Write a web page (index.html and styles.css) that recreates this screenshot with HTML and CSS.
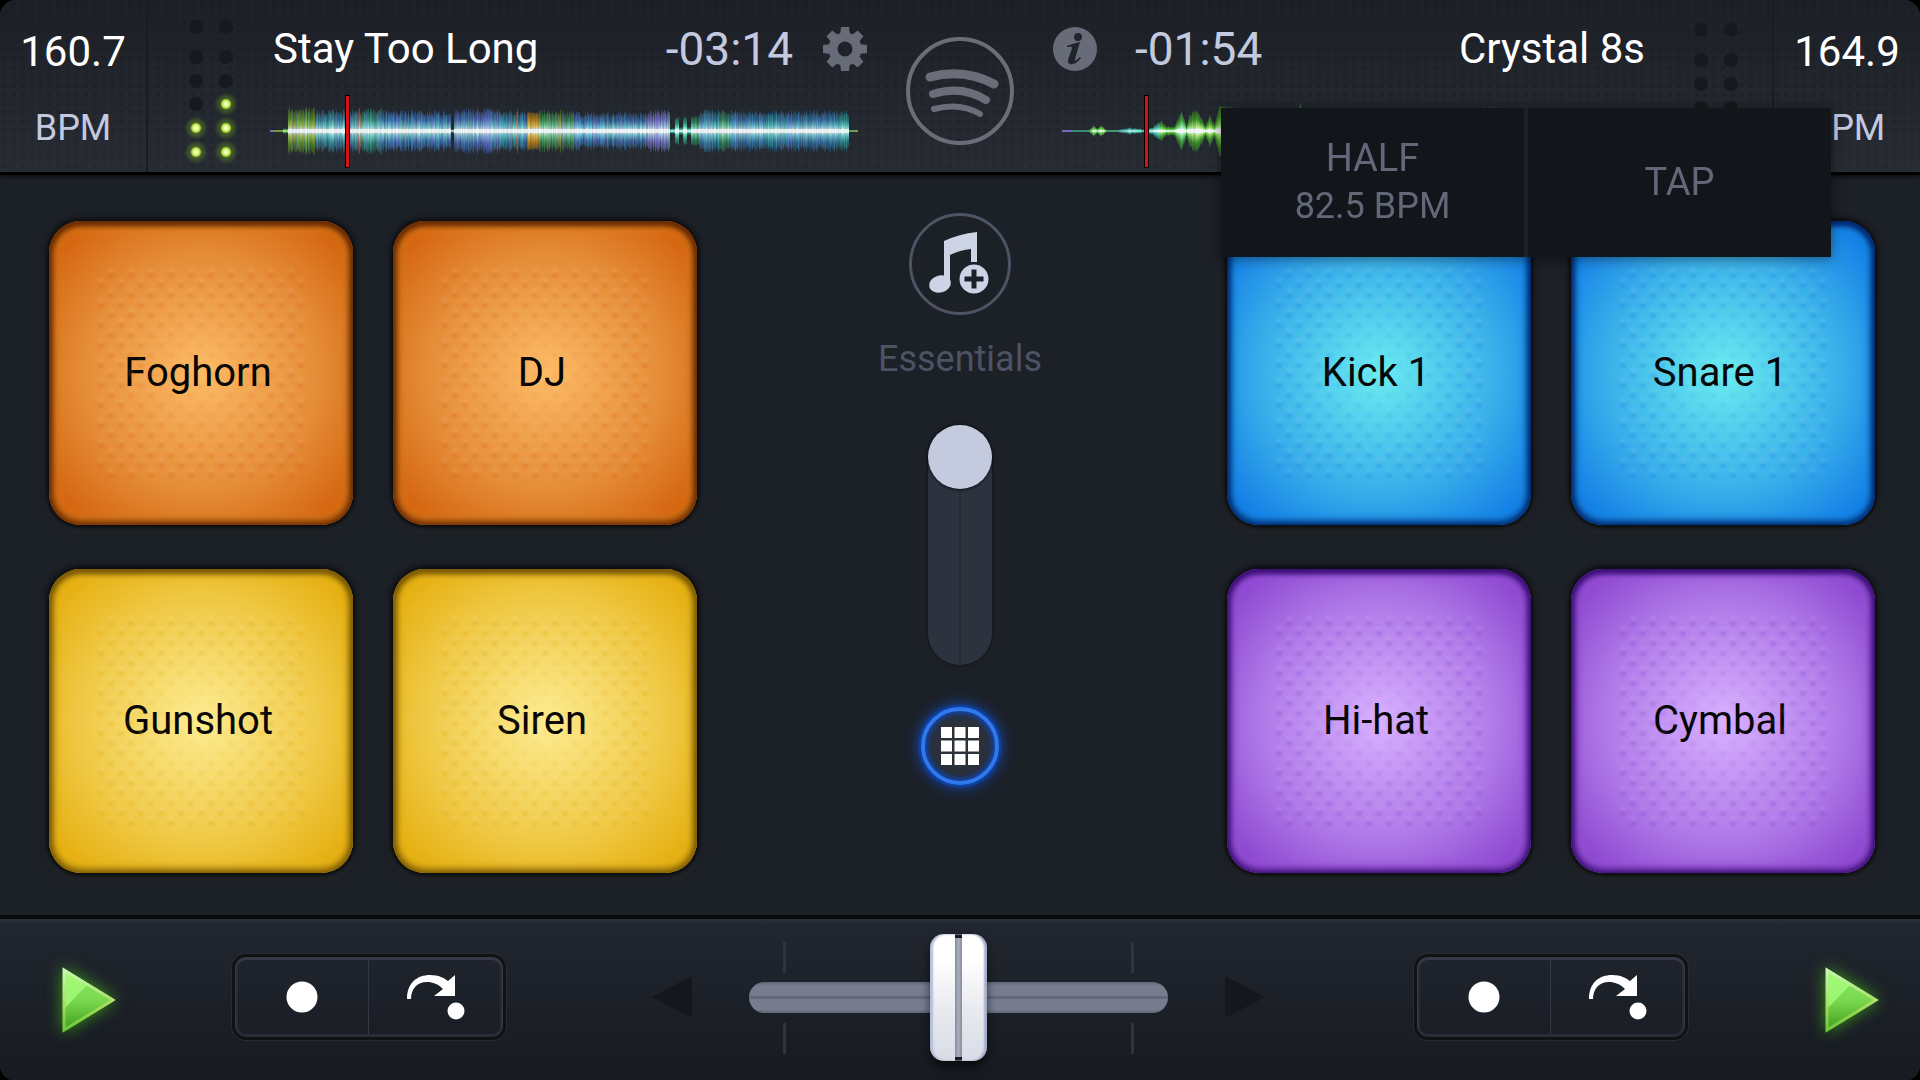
FILE: index.html
```html
<!DOCTYPE html>
<html lang="en">
<head>
    <meta charset="UTF-8">
    <meta name="viewport" content="width=device-width, initial-scale=1.0">
    <title>DJ Mixer</title>
    <link rel="stylesheet" href="styles.css">
</head>
<body>

<svg width="0" height="0" class="defs" aria-hidden="true">
    <defs>
        <linearGradient id="playFill" x1="0" y1="0" x2="0" y2="1">
            <stop offset="0" stop-color="#8fe868"/>
            <stop offset="0.5" stop-color="#79d94e"/>
            <stop offset="1" stop-color="#3f9a1c"/>
        </linearGradient>
        <linearGradient id="playEdge" x1="0" y1="0" x2="0" y2="1">
            <stop offset="0" stop-color="#c8f8b4"/>
            <stop offset="0.6" stop-color="#a5dc5c"/>
            <stop offset="1" stop-color="#6cc83a"/>
        </linearGradient>
        <radialGradient id="led">
            <stop offset="0" stop-color="#fffff0"/>
            <stop offset="0.4" stop-color="#f0fca0"/>
            <stop offset="1" stop-color="#8cc81e"/>
        </radialGradient>
        <radialGradient id="ledGlow">
            <stop offset="0.3" stop-color="#7ab41e" stop-opacity="0.5"/>
            <stop offset="1" stop-color="#7ab41e" stop-opacity="0"/>
        </radialGradient>
        <g id="ledOn">
            <circle r="12" fill="url(#ledGlow)"/>
            <circle r="5" fill="url(#led)"/>
        </g>
        <circle id="ledOff" r="7" fill="#16191d"/>
        <g id="playIcon">
            <path d="M1 1 L53 33 L1 65 Z" fill="url(#playFill)"/>
            <path d="M2 3 L26 17 L2 42 Z" fill="#a8ff7c" opacity="0.75"/>
            <path d="M2 3 L51 33 L2 63 Z" fill="none" stroke="url(#playEdge)" stroke-width="3"/>
        </g>
        <g id="jumpIcon" fill="#fff">
            <path d="M0 25 C0 9 10 1 23 1 C32 1 37 4 41 7 L48 1 V22 H27 L36 15 C31 10 26 8 20 8 C10 8 4 15 4 25 Z"/>
            <circle cx="49" cy="37" r="8.5"/>
        </g>
    </defs>
</svg>

<div class="app">
    <header class="header">
        <div class="bpm">
            <span class="bpm-value">160.7</span>
            <span class="bpm-label">BPM</span>
        </div>
        <svg class="meter" width="60" height="172" viewBox="0 0 60 172">
            <use href="#ledOff" x="15" y="27"/><use href="#ledOff" x="45" y="27"/>
            <use href="#ledOff" x="15" y="57"/><use href="#ledOff" x="45" y="57"/>
            <use href="#ledOff" x="15" y="81"/><use href="#ledOff" x="45" y="81"/>
            <use href="#ledOff" x="15" y="104"/><use href="#ledOn" x="45" y="104"/>
            <use href="#ledOn" x="15" y="128"/><use href="#ledOn" x="45" y="128"/>
            <use href="#ledOn" x="15" y="152"/><use href="#ledOn" x="45" y="152"/>
        </svg>

        <section class="deck deck-left">
            <div class="deck-info">
                <span class="deck-title">Stay Too Long</span>
                <span class="deck-time">-03:14</span>
                <button type="button" class="icon-button" aria-label="Settings">
                    <svg width="44" height="44" viewBox="-22 -22 44 44">
                        <g fill="#686c78">
                            <g id="teeth">
                                <path d="M-5 -14 L-4 -22 H4 L5 -14 Z M-5 14 L-4 22 H4 L5 14 Z M-14 -5 L-22 -4 V4 L-14 5 Z M14 -5 L22 -4 V4 L14 5 Z"/>
                            </g>
                            <use href="#teeth" transform="rotate(45)"/>
                        </g>
                        <circle r="12" fill="none" stroke="#686c78" stroke-width="9"/>
                    </svg>
                </button>
            </div>
            <div class="wave">
                <canvas id="waveLeft" height="74"></canvas>
                <i class="playhead" style="left: 12.8%"></i>
            </div>
        </section>

        <div class="source">
            <button type="button" class="icon-button" aria-label="Music source">
                <svg width="110" height="110" viewBox="-1 -1 110 110" fill="none" stroke="#6b6e79" stroke-linecap="round">
                    <circle cx="54" cy="54" r="52" stroke-width="4"/>
                    <path d="M24 40 Q58 31 88 47" stroke-width="9"/>
                    <path d="M27 57 Q56 48 80 63" stroke-width="8"/>
                    <path d="M28 72 Q54 65 74 77" stroke-width="6"/>
                </svg>
            </button>
        </div>

        <section class="deck deck-right">
            <div class="deck-info">
                <button type="button" class="icon-button" aria-label="Track info">
                    <svg width="44" height="44" viewBox="0 0 44 44">
                        <circle cx="22" cy="22" r="22" fill="#686c78"/>
                        <circle cx="25" cy="10" r="4" fill="#20242b"/>
                        <path d="M14 19 C18 17 23 16 27 15 L22 32 C21 35 24 33 27 30 L28 31 C24 36 20 38 17 37 C14 36 15 33 16 30 L19 21 C19 19 17 20 14 20 Z" fill="#20242b"/>
                    </svg>
                </button>
                <span class="deck-time">-01:54</span>
                <span class="deck-title">Crystal 8s</span>
            </div>
            <div class="wave">
                <canvas id="waveRight" height="74"></canvas>
                <i class="playhead" style="left: 14%"></i>
            </div>
        </section>

        <svg class="meter meter-right" width="60" height="172" viewBox="0 0 60 172">
            <use href="#ledOff" x="15" y="30"/><use href="#ledOff" x="45" y="30"/>
            <use href="#ledOff" x="15" y="60"/><use href="#ledOff" x="45" y="60"/>
            <use href="#ledOff" x="15" y="84"/><use href="#ledOff" x="45" y="84"/>
            <use href="#ledOff" x="15" y="108"/><use href="#ledOff" x="45" y="108"/>
        </svg>
        <div class="bpm bpm-right">
            <span class="bpm-value">164.9</span>
            <span class="bpm-label">BPM</span>
        </div>

        <div class="bpm-menu">
            <button type="button" class="bpm-option">HALF<span class="bpm-option-sub">82.5 BPM</span></button>
            <button type="button" class="bpm-option">TAP</button>
        </div>
    </header>

    <main class="main">
        <div class="pads">
            <button type="button" class="pad pad-orange">Foghorn</button>
            <button type="button" class="pad pad-orange">DJ</button>
            <button type="button" class="pad pad-yellow">Gunshot</button>
            <button type="button" class="pad pad-yellow">Siren</button>
        </div>

        <div class="center">
            <button type="button" class="pack-button" aria-label="Choose sample pack">
                <svg width="102" height="102" viewBox="0 0 102 102">
                    <circle cx="51" cy="51" r="49.5" fill="none" stroke="#4f5363" stroke-width="3"/>
                    <g fill="#cdd4e6">
                        <path d="M35 28 Q50 21 68 19 V49 L62 49 V36 Q51 37 41 42 V71 H35 Z"/>
                        <ellipse cx="31" cy="71" rx="11" ry="8.5" transform="rotate(-14 31 71)"/>
                        <circle cx="65" cy="66" r="14.5"/>
                    </g>
                    <path d="M65 56.500 V75.500 M55.500 66 H74.500" stroke="#1c2027" stroke-width="5"/>
                </svg>
            </button>
            <label class="pack-name" for="padVolume">Essentials</label>
            <input type="range" id="padVolume" class="volume" min="0" max="100" value="100">
            <button type="button" class="grid-button" aria-label="Pads view">
                <svg width="38" height="38" viewBox="0 0 38 38" fill="#fff">
                    <path d="M0 0h11v11H0z M13.500 0h11v11h-11z M27 0h11v11H27z M0 13.500h11v11H0z M13.500 13.500h11v11h-11z M27 13.500h11v11H27z M0 27h11v11H0z M13.500 27h11v11h-11z M27 27h11v11H27z"/>
                </svg>
            </button>
        </div>

        <div class="pads">
            <button type="button" class="pad pad-blue">Kick 1</button>
            <button type="button" class="pad pad-blue">Snare 1</button>
            <button type="button" class="pad pad-purple">Hi-hat</button>
            <button type="button" class="pad pad-purple">Cymbal</button>
        </div>
    </main>

    <footer class="footer">
        <div class="transport transport-left">
            <button type="button" class="play" aria-label="Play left deck">
                <svg width="54" height="66" viewBox="0 0 54 66"><use href="#playIcon"/></svg>
            </button>
            <div class="cue-group">
                <button type="button" class="cue" aria-label="Cue">
                    <svg width="32" height="32" viewBox="0 0 32 32"><circle cx="16" cy="16" r="15.5" fill="#fff"/></svg>
                </button>
                <button type="button" class="jump" aria-label="Jump to cue">
                    <svg width="58" height="46" viewBox="0 0 58 46"><use href="#jumpIcon"/></svg>
                </button>
            </div>
        </div>

        <div class="crossfader">
            <svg width="40" height="44" viewBox="0 0 40 44"><path d="M40 1 V43 L0 22 Z" fill="#14171b"/></svg>
            <div class="fader">
                <input type="range" min="0" max="100" value="50" aria-label="Crossfader">
            </div>
            <svg width="40" height="44" viewBox="0 0 40 44"><path d="M0 1 V43 L40 22 Z" fill="#14171b"/></svg>
        </div>

        <div class="transport transport-right">
            <div class="cue-group">
                <button type="button" class="cue" aria-label="Cue">
                    <svg width="32" height="32" viewBox="0 0 32 32"><circle cx="16" cy="16" r="15.5" fill="#fff"/></svg>
                </button>
                <button type="button" class="jump" aria-label="Jump to cue">
                    <svg width="58" height="46" viewBox="0 0 58 46"><use href="#jumpIcon"/></svg>
                </button>
            </div>
            <button type="button" class="play" aria-label="Play right deck">
                <svg width="54" height="66" viewBox="0 0 54 66"><use href="#playIcon"/></svg>
            </button>
        </div>
    </footer>
</div>

<script src="script.js"></script>
</body>
</html>
```

FILE: styles.css
```css
* {
    box-sizing: border-box;
}

body {
    margin: 0;
    background-color: #000;
    font-family: Roboto, "Noto Sans", sans-serif;
    color: #fff;
}

button {
    padding: 0;
    border: none;
    background: none;
    font-family: inherit;
    color: inherit;
    cursor: pointer;
}

svg,
canvas {
    display: block;
}

.defs {
    position: absolute;
}

.app {
    display: flex;
    flex-direction: column;
    min-height: 100vh;
    border-radius: 16px;
    overflow: hidden;
    background-color: #1c2027;
}

/* Header */
.header {
    position: relative;
    z-index: 2;
    display: flex;
    height: 175px;
    border-bottom: 3px solid #000;
    background-image:
        radial-gradient(circle, rgba(0, 0, 0, 0.08) 2px, transparent 3px),
        linear-gradient(#1d2026, #22262d 50%, #282c34);
    background-size: 9px 9px, 100% 100%;
    box-shadow: 0 2px 4px rgba(0, 0, 0, 0.6);
}

.bpm {
    display: flex;
    flex-direction: column;
    align-items: center;
    gap: 32px;
    width: 148px;
    padding-top: 28px;
    border-right: 2px solid #191c21;
}

.bpm-right {
    border-right: none;
    border-left: 2px solid #191c21;
}

.bpm-value {
    font-size: 42px;
    line-height: 48px;
}

.bpm-label {
    font-size: 36px;
    line-height: 40px;
    color: #c3cae0;
}

.meter {
    width: 122px;
    padding-right: 29px;
    padding-left: 33px;
}

.meter-right {
    padding-right: 26px;
    padding-left: 36px;
}

.deck {
    flex: 1;
    min-width: 0;
    padding-top: 25px;
}

.deck-info {
    display: flex;
    align-items: center;
    height: 48px;
    margin-bottom: 21px;
    line-height: 48px;
    white-space: nowrap;
}

.deck-left .deck-info {
    padding-left: 3px;
}

.deck-right .deck-info {
    padding-right: 5px;
}

.deck-title {
    font-size: 42px;
}

.deck-time {
    font-size: 46px;
    color: #c3cae0;
}

.deck-left .deck-time {
    margin-right: 30px;
    margin-left: auto;
}

.deck-right .deck-time {
    margin-right: auto;
    margin-left: 38px;
}

.wave {
    position: relative;
    height: 74px;
}

.deck-left .wave {
    margin-right: 9px;
}

.deck-right .wave {
    margin-left: 9px;
}

.wave canvas {
    width: 100%;
    height: 74px;
}

.playhead {
    position: absolute;
    top: 1px;
    bottom: 0;
    width: 5px;
    border: 1px solid #000;
    background-color: #dc0f14;
}

.source {
    display: flex;
    justify-content: center;
    align-items: flex-start;
    width: 186px;
    padding-top: 36px;
}

.bpm-menu {
    position: absolute;
    top: 108px;
    right: 89px;
    display: flex;
    gap: 4px;
    background-color: #1c1f24;
    box-shadow: 0 2px 12px rgba(0, 0, 0, 0.45);
}

.bpm-option {
    display: flex;
    flex-direction: column;
    justify-content: center;
    align-items: center;
    width: 303px;
    height: 149px;
    padding-bottom: 2px;
    background-color: #121519;
    font-size: 38px;
    line-height: 48px;
    color: #636879;
}

.bpm-option-sub {
    font-size: 36px;
}

/* Pads */
.main {
    flex: 1;
    display: grid;
    grid-template-columns: 1fr 530px 1fr;
    align-items: start;
    padding: 0 45px 42px 49px;
}

.pads {
    display: grid;
    grid-template-columns: 1fr 1fr;
    gap: 44px 40px;
    padding-top: 46px;
}

.pad {
    --light: #fdbb66;
    --mid: #e58d38;
    --deep: #d4620e;
    --edge: #6a2c04;
    --rim: rgba(226, 138, 34, 0.6);
    --dot: rgba(214, 80, 10, 0.45);
    position: relative;
    aspect-ratio: 1;
    padding-right: 6px;
    border-radius: 32px;
    background: radial-gradient(circle, var(--light), var(--mid) 54%, var(--deep) 90%);
    box-shadow:
        inset 0 3px 5px 1px var(--edge),
        inset 0 0 7px 4px var(--edge),
        inset 0 0 8px 9px var(--rim),
        0 0 4px 3px #0a0c0e,
        0 3px 4px 5px #23262a;
    font-size: 40px;
    line-height: 48px;
    color: #050505;
}

/* two offset layers of bumps make the rubber texture */
.pad::before,
.pad::after {
    content: "";
    position: absolute;
    inset: 42px 52px;
    background-image:
        radial-gradient(circle at 10px 8px, rgba(255, 255, 255, 0.16), transparent 5px),
        radial-gradient(circle at 10px 12px, var(--dot), transparent 5px);
    background-size: 20px 20px;
    opacity: 0.6;
    -webkit-mask-image: radial-gradient(circle, rgba(0, 0, 0, 0.3) 20%, #000 60%);
    mask-image: radial-gradient(circle, rgba(0, 0, 0, 0.3) 20%, #000 60%);
}

.pad::after {
    inset: 52px 42px;
}

.pad-yellow {
    --light: #fdec92;
    --mid: #f0ca48;
    --deep: #e5ae0e;
    --edge: #7c5a04;
    --rim: rgba(236, 188, 32, 0.6);
    --dot: rgba(224, 165, 10, 0.5);
}

.pad-blue {
    --light: #6aecf0;
    --mid: #3ab0ea;
    --deep: #127de6;
    --edge: #002a70;
    --rim: rgba(26, 148, 236, 0.6);
    --dot: rgba(14, 120, 225, 0.5);
}

.pad-purple {
    --light: #d8b0ff;
    --mid: #b07ae8;
    --deep: #8b45cf;
    --edge: #3d1078;
    --rim: rgba(166, 94, 226, 0.6);
    --dot: rgba(125, 60, 205, 0.5);
}

/* Center column */
.center {
    display: flex;
    flex-direction: column;
    align-items: center;
    padding-top: 38px;
    padding-right: 4px;
}

.pack-name {
    margin-top: 24px;
    margin-bottom: 46px;
    font-size: 36px;
    line-height: 40px;
    color: #4d5265;
}

.volume {
    appearance: none;
    writing-mode: vertical-lr;
    direction: rtl;
    width: 64px;
    height: 240px;
    margin: 0;
    border-radius: 32px;
    background: linear-gradient(90deg, #2d323f 31px, #262a35 31px, #262a35 33px, #2d323f 33px);
    box-shadow: 0 0 2px 1px #14161a;
}

.volume::-webkit-slider-thumb {
    appearance: none;
    width: 64px;
    height: 64px;
    border-radius: 50%;
    background-color: #c4cbdf;
    box-shadow: 0 1px 3px #0c0e12;
}

.grid-button {
    display: flex;
    justify-content: center;
    align-items: center;
    width: 78px;
    height: 78px;
    margin-top: 42px;
    border: 4px solid #2f78ee;
    border-radius: 50%;
    background: radial-gradient(circle, #2c3038 40%, #22304e 100%);
    box-shadow:
        0 0 3px 2px #0a46b4,
        0 0 14px 3px rgba(20, 84, 220, 0.7),
        inset 0 0 5px 2px #0c48bc;
}

/* Footer */
.footer {
    display: grid;
    grid-template-columns: 1fr auto 1fr;
    align-items: center;
    height: 166px;
    padding-bottom: 6px;
    border-top: 4px solid #07090b;
    background-image: linear-gradient(#2b303a, #22262f 6px, #1c2028 50%, #171a21);
}

.transport {
    display: flex;
    align-items: center;
}

.transport-left {
    gap: 116px;
    padding-left: 62px;
}

.transport-right {
    justify-content: flex-end;
    gap: 137px;
    padding-right: 41px;
}

.play {
    padding-top: 6px;
    filter: drop-shadow(0 0 8px rgba(70, 190, 20, 0.75));
}

.cue-group {
    display: flex;
    width: 274px;
    height: 86px;
    padding: 3px;
    border: 3px solid #101216;
    border-radius: 14px;
    box-shadow:
        0 0 1px 1px #2a2e35,
        inset 0 2px 0 1px #343945,
        inset 0 0 0 3px #292d37;
}

.cue-group button {
    flex: 1;
    display: flex;
    justify-content: center;
    align-items: center;
}

.cue-group .cue {
    padding-right: 2px;
}

.cue-group .jump {
    padding-left: 4px;
    border-left: 1px solid #343842;
}

.crossfader {
    display: flex;
    align-items: center;
    gap: 57px;
    padding-right: 4px;
}

.fader {
    background:
        linear-gradient(#30343d, #30343d) 34px 8px / 3px 31px no-repeat,
        linear-gradient(#30343d, #30343d) 34px 89px / 3px 31px no-repeat,
        linear-gradient(#30343d, #30343d) 382px 8px / 3px 31px no-repeat,
        linear-gradient(#30343d, #30343d) 382px 89px / 3px 31px no-repeat;
}

.fader input {
    appearance: none;
    display: block;
    width: 419px;
    height: 127px;
    margin: 0;
    background: none;
}

.fader input::-webkit-slider-runnable-track {
    height: 31px;
    border-radius: 16px;
    background: linear-gradient(#606674, #777e8f 4px, #777b8e 14px, #646979 14px, #646979 17px, #777b8e 17px, #777e8f 27px, #606674);
}

.fader input::-webkit-slider-thumb {
    appearance: none;
    width: 57px;
    height: 127px;
    margin-top: -48px;
    border-radius: 14px;
    background:
        linear-gradient(#14171b, #14171b) center top / 7px 4px no-repeat,
        linear-gradient(#14171b, #14171b) center bottom / 7px 4px no-repeat,
        linear-gradient(90deg, #868c9c, #a8aebc 50%, #868c9c) center / 7px 100% no-repeat,
        linear-gradient(#fff 20%, #e9eaf0 60%, #d9dce6);
    box-shadow:
        inset 3px 0 2px #b4bedb,
        inset -3px 0 2px #a4aecb,
        0 6px 10px rgba(0, 0, 0, 0.6);
}
```

FILE: script.js
```js
// small seeded generator so the waveforms look the same on every load
function makeRandom(seed) {
    return function () {
        seed = (seed * 16807) % 2147483647;
        return seed / 2147483647;
    };
}

// [position, amplitude, noise, tip colour, body colour]
const leftTrack = [
    [0, 1, 0, '#7a6cc0', '#7a6cc0'],
    [4, 1, 0, '#6a8f3a', '#86b44a'],
    [13, 2, 1, '#4c9a4c', '#8ad66a'],
    [18, 18, 6, '#5a8a24', '#b0d058'],
    [45, 16, 6, '#347c90', '#7cd4d8'],
    [88, 17, 6, '#9a5a4a', '#e0a8a0'],
    [91, 17, 6, '#2f8070', '#80dcd0'],
    [112, 15, 6, '#3a68ac', '#84cce0'],
    [181, 2, 1, '#2c5a80', '#70c8d8'],
    [184, 17, 6, '#4464ac', '#88c4e4'],
    [230, 16, 5, '#307890', '#78d4dc'],
    [246, 18, 5, '#8a5848', '#c8a88c'],
    [248, 16, 5, '#306c94', '#78ccdc'],
    [257, 17, 3, '#b8841c', '#e8c860'],
    [269, 16, 6, '#3c8448', '#80d8a0'],
    [287, 16, 6, '#708a28', '#b8d868'],
    [291, 16, 5, '#347c48', '#88d8b0'],
    [304, 14, 6, '#346498', '#78ccdc'],
    [375, 15, 6, '#6468b0', '#a4c0ea'],
    [400, 2, 1, '#3a9a88', '#70e0d0'],
    [405, 12, 2, '#2c8a70', '#70d8c0'],
    [409, 3, 1, '#2c8a70', '#70d8c0'],
    [413, 12, 2, '#2c8a70', '#70d8c0'],
    [417, 3, 1, '#2c8a70', '#70d8c0'],
    [421, 13, 3, '#2c9060', '#78e0b8'],
    [430, 17, 5, '#307494', '#78d4dc'],
    [449, 17, 4, '#348460', '#80dcb0'],
    [460, 16, 5, '#306c9c', '#78cce0'],
    [565, 15, 6, '#2c7888', '#78d4dc'],
    [579, 1, 0, '#50a860', '#50a860'],
    [585, 1, 0, '#b88a30', '#b88a30'],
    [588, 1, 0, '#b88a30', '#b88a30']
];

const rightTrack = [
    [0, 1, 0, '#7468b8', '#7468b8'],
    [10, 1, 0, '#3a8a70', '#3a8a70'],
    [27, 1, 0, '#50a840', '#60b850'],
    [31, 5, 1, '#50a840', '#90e080'],
    [35, 2, 0, '#50a840', '#90e080'],
    [38, 5, 1, '#50a840', '#90e080'],
    [44, 1, 0, '#3a8a60', '#60c080'],
    [56, 1, 0, '#3a8a80', '#60c0b0'],
    [66, 3, 1, '#3a9a90', '#70dcd0'],
    [80, 1, 0, '#3a9a90', '#70dcd0'],
    [92, 4, 2, '#3a9a90', '#70dcd0'],
    [98, 9, 2, '#3c8c2c', '#80d860'],
    [104, 4, 1, '#3c8c2c', '#80d860'],
    [112, 4, 1, '#3c8c2c', '#80d880'],
    [119, 19, 1, '#3c9c48', '#90e8b8'],
    [124, 5, 1, '#3c8c2c', '#90e080'],
    [127, 14, 4, '#3c8c2c', '#a0e070'],
    [134, 20, 2, '#3c8c2c', '#a8e078'],
    [143, 5, 1, '#3c8c2c', '#90d860'],
    [147, 14, 2, '#3c8c2c', '#90d860'],
    [152, 6, 1, '#3c8c2c', '#90d860'],
    [157, 24, 1, '#3c8c2c', '#90d860'],
    [236, 18, 2, '#3c8c2c', '#90d860'],
    [238, 28, 0, '#3c8c2c', '#90d860'],
    [240, 18, 2, '#3c8c2c', '#90d860'],
    [415, 18, 4, '#2c5a38', '#80c880'],
    [420, 20, 5, '#2c5a38', '#80c880'],
    [493, 18, 5, '#2c5a38', '#80c880'],
    [500, 16, 3, '#2c5a38', '#80c880'],
    [588, 1, 0, '#3c8c2c', '#90d860']
];

function drawWave(id, track, seed, smooth) {
    const canvas = document.getElementById(id);
    const ctx = canvas.getContext('2d');
    const random = makeRandom(seed);
    canvas.width = canvas.clientWidth;
    const width = canvas.width;
    const mid = 37;
    const scale = 588 / width;

    for (let x = 0; x < width; x++) {
        const pos = x * scale;
        let i = 0;
        while (i < track.length - 2 && track[i + 1][0] <= pos) i++;
        const part = track[i];
        const next = track[i + 1];
        let amp = part[1];
        if (smooth) {
            amp += (next[1] - part[1]) * (pos - part[0]) / (next[0] - part[0]);
        }
        amp = Math.max(1, amp + random() * part[2]);
        const tip = part[3];
        const body = part[4];

        const gradient = ctx.createLinearGradient(0, mid - amp, 0, mid + amp);
        gradient.addColorStop(0, amp > 2 ? tip + '70' : tip);
        gradient.addColorStop(0.2, tip);
        gradient.addColorStop(0.38, body);
        gradient.addColorStop(0.47, amp > 2 ? '#f0faf8' : body);
        gradient.addColorStop(0.53, amp > 2 ? '#f0faf8' : body);
        gradient.addColorStop(0.62, body);
        gradient.addColorStop(0.8, tip);
        gradient.addColorStop(1, amp > 2 ? tip + '70' : tip);
        ctx.globalAlpha = part[2] > 2 ? 0.7 + random() * 0.3 : 1;
        ctx.fillStyle = gradient;
        ctx.fillRect(x, mid - amp, 1, amp * 2);

        // some columns lean towards a neighbouring hue
        if (part[2] > 4 && random() > 0.6) {
            ctx.globalAlpha = 0.25;
            ctx.fillStyle = ['#40d0a0', '#8060e0', '#40b0e0'][Math.floor(random() * 3)];
            ctx.fillRect(x, mid - amp + 3, 1, amp * 2 - 6);
        }
        if (amp > 10) {
            ctx.globalAlpha = 0.8;
            ctx.fillStyle = '#f2f8f8';
            ctx.fillRect(x, mid - 2, 1, 4);
        }
    }
    ctx.globalAlpha = 1;
}

function drawWaves() {
    drawWave('waveLeft', leftTrack, 4211, false);
    drawWave('waveRight', rightTrack, 977, true);
}

drawWaves();
window.addEventListener('resize', drawWaves);
```
